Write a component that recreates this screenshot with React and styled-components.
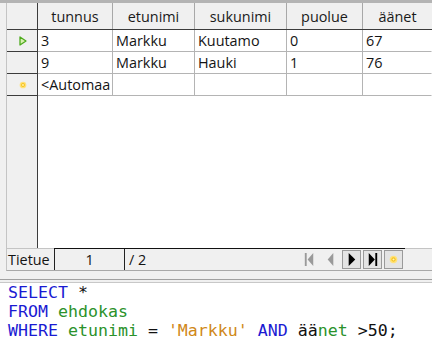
import React from 'react';
import styled, { createGlobalStyle } from 'styled-components';

const Global = createGlobalStyle`
  html, body { margin: 0; padding: 0; }
  body { background: #f0f0f0; font-family: "Open Sans", "Noto Sans", sans-serif; }
`;

const Page = styled.div`
  width: 432px;
  height: 348px;
  display: flex;
  flex-direction: column;
  overflow: hidden;
  background: #f0f0f0;
`;

const TopStrip = styled.div`
  height: 3px;
  background: #b4b4b4;
  flex: none;
`;

const GridArea = styled.div`
  flex: 1;
  display: flex;
  flex-direction: column;
  margin-left: 6px;
  border-left: 1px solid #c4c4c4;
  min-height: 0;
`;

const cols = '31px 75px 82px 92px 76px 1fr';

const HeaderRow = styled.div`
  display: grid;
  grid-template-columns: ${cols};
  height: 26px;
  border-bottom: 1px solid #3c3c3c;
  background: #f0f0f0;
  flex: none;
`;

const HeadCell = styled.div`
  display: flex;
  align-items: center;
  justify-content: center;
  font-size: 14.4px;
  color: #1a1a1a;
  border-right: 1px solid ${p => (p.$corner ? '#3c3c3c' : '#a8a8a8')};
  ${p => p.$last && 'border-right: none;'}
`;

const Row = styled.div`
  display: grid;
  grid-template-columns: ${cols};
  height: 22px;
  flex: none;
`;

const RowHead = styled.div`
  background: #f0f0f0;
  border-right: 1px solid #3c3c3c;
  border-bottom: 1px solid #3c3c3c;
  display: flex;
  align-items: center;
  justify-content: center;
  padding-left: 2px;
`;

const Cell = styled.div`
  background: #fff;
  border-right: 1px solid ${p => (p.$last ? 'transparent' : '#b4b4b4')};
  border-bottom: 1px solid #b4b4b4;
  font-size: 14.4px;
  color: #141414;
  padding-left: 3px;
  display: flex;
  align-items: center;
  white-space: nowrap;
  overflow: hidden;
`;

const Filler = styled.div`
  flex: 1;
  display: grid;
  grid-template-columns: 31px 1fr;
`;

const FillHead = styled.div`
  background: #f0f0f0;
  border-right: 1px solid #3c3c3c;
`;

const FillBody = styled.div`
  background: #fff;
`;

const Navigator = styled.div`
  height: 21px;
  flex: none;
  display: flex;
  align-items: stretch;
  margin-left: 6px;
  border-left: 1px solid #c4c4c4;
  border-top: 1px solid #c4c4c4;
  border-bottom: 1px solid #a8a8a8;
  font-size: 14.4px;
  color: #141414;
`;

const NavLabel = styled.div`
  width: 46px;
  padding-left: 1px;
  display: flex;
  align-items: center;
`;

const NavStrip = styled.div`
  width: 351px;
  display: flex;
  align-items: center;
  border-top: 1px solid #111;
  margin-top: -1px;
`;

const RecordBox = styled.div`
  width: 69px;
  height: 100%;
  border-left: 1px solid #222;
  border-right: 1px solid #222;
  display: flex;
  align-items: center;
  justify-content: center;
`;

const Total = styled.div`
  padding-left: 4px;
  flex: 1;
`;

const NavButtons = styled.div`
  display: flex;
  gap: 2px;
  align-items: center;
  padding-right: 2px;
`;

const NavBtn = styled.div`
  width: 19px;
  height: 19px;
  box-sizing: border-box;
  display: flex;
  align-items: center;
  justify-content: center;
  border: 1px solid ${p => (p.$active ? '#9a9a9a' : 'transparent')};
  background: ${p => (p.$active ? '#e4e4e4' : 'transparent')};
`;

const Gap = styled.div`
  height: 8px;
  flex: none;
`;

const Splitter = styled.div`
  height: 4px;
  flex: none;
  border-top: 1px solid #a0a0a0;
  border-bottom: 1px solid #c8c8c8;
  box-sizing: border-box;
`;

const Editor = styled.div`
  flex: none;
  height: 65px;
  background: #fff;
  padding: 0 0 0 8px;
  font-family: "DejaVu Sans Mono", "Liberation Mono", monospace;
  font-size: 16.6px;
  line-height: 19px;
  color: #111;
  white-space: pre;
`;

const Tok = styled.span`
  color: ${p => ({ kw: '#1a1ad2', id: '#2b922b', str: '#d08818' }[p.$k] || '#111')};
`;

const Play = () => (
  <svg width="8" height="10" viewBox="0 0 8 10">
    <path d="M1 1 L7 5 L1 9 Z" fill="#d8f0b0" stroke="#4caa1c" strokeWidth="1.3" strokeLinejoin="round" />
  </svg>
);

const Sun = ({ size = 9 }) => (
  <svg width={size} height={size} viewBox="0 0 10 10">
    <circle cx="5" cy="5" r="4.2" fill="#ffe27a" />
    <circle cx="5" cy="5" r="2.4" fill="#f6c21c" />
    <circle cx="5" cy="5" r="1.2" fill="#fff3b8" />
  </svg>
);

const NavIcon = ({ kind, color }) => {
  const paths = {
    first: 'M3 1 H5 V15 H3 Z M12 1 V15 L6 8 Z',
    prev: 'M11 1 V15 L5 8 Z',
    next: 'M5 1 V15 L12 8 Z',
    last: 'M4 1 V15 L10.5 8 Z M11 1 H13 V15 H11 Z',
  };
  return (
    <svg width="15" height="15" viewBox="0 0 16 16">
      <path d={paths[kind]} fill={color} />
    </svg>
  );
};

const headers = ['tunnus', 'etunimi', 'sukunimi', 'puolue', 'äänet'];
const rows = [
  ['3', 'Markku', 'Kuutamo', '0', '67'],
  ['9', 'Markku', 'Hauki', '1', '76'],
];

export default function App() {
  return (
    <Page>
      <Global />
      <TopStrip />
      <GridArea>
        <HeaderRow>
          <HeadCell $corner />
          {headers.map((h, i) => (
            <HeadCell key={h} $last={i === headers.length - 1}>{h}</HeadCell>
          ))}
        </HeaderRow>
        {rows.map((r, ri) => (
          <Row key={ri}>
            <RowHead>{ri === 0 && <Play />}</RowHead>
            {r.map((v, i) => (
              <Cell key={i} $last={i === r.length - 1}>{v}</Cell>
            ))}
          </Row>
        ))}
        <Row>
          <RowHead><Sun size={8} /></RowHead>
          <Cell>&lt;Automaa</Cell>
          <Cell />
          <Cell />
          <Cell />
          <Cell $last />
        </Row>
        <Filler>
          <FillHead />
          <FillBody />
        </Filler>
      </GridArea>
      <Navigator>
        <NavLabel>Tietue</NavLabel>
        <NavStrip>
          <RecordBox>1</RecordBox>
          <Total>/ 2</Total>
          <NavButtons>
            <NavBtn><NavIcon kind="first" color="#9a9a9a" /></NavBtn>
            <NavBtn><NavIcon kind="prev" color="#9a9a9a" /></NavBtn>
            <NavBtn $active><NavIcon kind="next" color="#000" /></NavBtn>
            <NavBtn $active><NavIcon kind="last" color="#000" /></NavBtn>
            <NavBtn $active><Sun size={9} /></NavBtn>
          </NavButtons>
        </NavStrip>
      </Navigator>
      <Gap />
      <Splitter />
      <Editor>
        <div><Tok $k="kw">SELECT</Tok> *</div>
        <div><Tok $k="kw">FROM</Tok> <Tok $k="id">ehdokas</Tok></div>
        <div>
          <Tok $k="kw">WHERE</Tok> <Tok $k="id">etunimi</Tok> = <Tok $k="str">'Markku'</Tok>{' '}
          <Tok $k="kw">AND</Tok> ää<Tok $k="id">net</Tok> &gt;50;
        </div>
      </Editor>
    </Page>
  );
}
